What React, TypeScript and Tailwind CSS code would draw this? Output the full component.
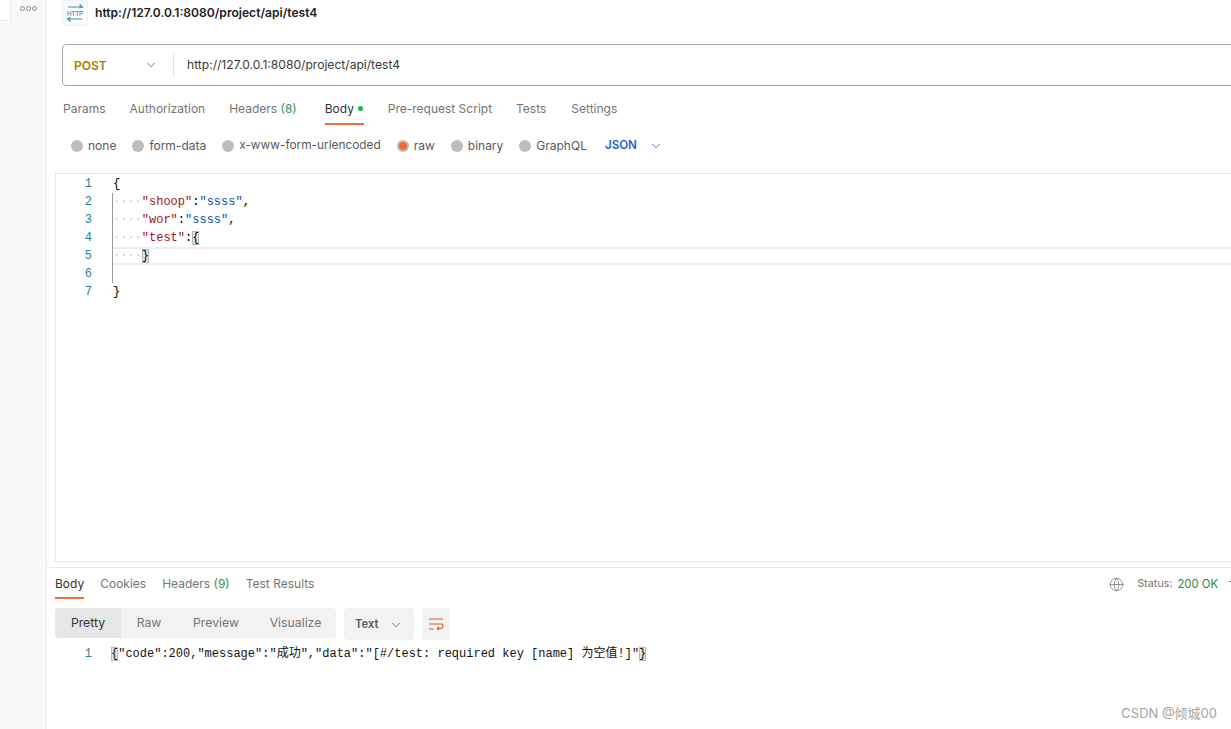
import { ChevronDown, Globe } from 'lucide-react'

const sans = "font-['Inter','Noto_Sans_CJK_SC',sans-serif]"
const mono = "font-['Liberation_Mono','Noto_Sans_CJK_SC',monospace]"

function HttpIcon() {
  return (
    <div className="flex h-[26px] w-[26px] shrink-0 items-center justify-center rounded-[4px] border border-[#efefef] bg-[#fafafa]">
      <svg width="24" height="24" viewBox="0 0 24 24" fill="none">
        <path d="M5 6H19M16.500 3.500L19.500 6L16.500 7" stroke="#2f9aa8" strokeWidth="1.2" />
        <path d="M19 18H5M7.500 16.500L4.500 18L7.500 20.500" stroke="#2f9aa8" strokeWidth="1.2" />
        <text transform="translate(12 15) scale(0.77 1)" textAnchor="middle" fontSize="8" fontFamily="Liberation Sans" fill="#1f6f9e">HTTP</text>
      </svg>
    </div>
  )
}

function WrapIcon() {
  return (
    <svg width="16" height="16" viewBox="0 0 16 16" fill="none" stroke="#e0562a" strokeWidth="1.1">
      <path d="M1 3H15M1 8H13.500C15.500 8 15.500 12.500 13 12.500H9.500M11 10.800L9.200 12.500L11 14.200M1 13H6" />
    </svg>
  )
}

function Radio({ label, checked, small }: { label: string; checked?: boolean; small?: boolean }) {
  return (
    <div className="flex items-center gap-[5px]">
      <span className="flex h-[12px] w-[12px] items-center justify-center rounded-full bg-[#bdbdbd]">
        {checked && <span className="h-[8px] w-[8px] rounded-full bg-[#f26b3a]" />}
      </span>
      <span className={small ? 'text-[11.85px] text-[#5a5a5a]' : 'text-[#5a5a5a]'}>{label}</span>
    </div>
  )
}

function Dots() {
  return <span className="text-[#cfcfcf]">····</span>
}

function Brace({ children }: { children: string }) {
  return <span className="bg-[#e2e6df] outline outline-1 -outline-offset-1 outline-[#b5b8b3]">{children}</span>
}

function Gutter({ n }: { n: number }) {
  return <span className="w-[36px] shrink-0 text-right text-[#2d7d9a]">{n}</span>
}

function CodeLine({ n, children }: { n: number; children?: React.ReactNode }) {
  return (
    <div className="flex h-[18px] items-center">
      <Gutter n={n} />
      <div className="ml-[21px] flex-1 whitespace-pre">{children}</div>
    </div>
  )
}

export default function App() {
  return (
    <div className={`relative flex h-[729px] w-[1231px] overflow-hidden bg-white text-[13px] ${sans}`}>
      {/* sidebar */}
      <div className="flex w-[47px] shrink-0 border-r border-[#ededed] bg-[#f9f9f9]">
        <div className="h-[21px] w-[11px] rounded-br-[2px] border-r border-b border-[#ececec] bg-white" />
        <div className="ml-[9px] mt-[6px] flex h-[6px] gap-[1px]">
          <span className="h-[5px] w-[5px] rounded-full border border-[#8a8a8a]" />
          <span className="h-[5px] w-[5px] rounded-full border border-[#8a8a8a]" />
          <span className="h-[5px] w-[5px] rounded-full border border-[#8a8a8a]" />
        </div>
      </div>

      <div className="flex min-w-0 flex-1 flex-col">
        {/* title */}
        <div className="flex h-[44px] items-start gap-[7px] pl-[15px]">
          <HttpIcon />
          <span className="mt-[5px] text-[12.1px] leading-[16px] font-semibold text-[#212121]">http://127.0.0.1:8080/project/api/test4</span>
        </div>

        {/* url bar */}
        <div className="-mr-[20px] ml-[15px] flex h-[42px] items-center rounded-[4px] border border-[#a6a6a6]">
          <span className="ml-[11px] mt-[1px] w-[72px] text-[12px] font-semibold text-[#ad7a03]">POST</span>
          <ChevronDown size={14} strokeWidth={1.4} className="-ml-[2px] text-[#5f5f5f]" />
          <span className="ml-[15px] h-[24px] w-px bg-[#e0e0e0]" />
          <span className="ml-[13px] text-[12.1px] text-[#3a3a3a]">http://127.0.0.1:8080/project/api/test4</span>
        </div>

        {/* request tabs */}
        <div className="ml-[16px] mt-[14px] flex h-[25px] gap-[24px] text-[12px] text-[#757575]">
          <span>Params</span>
          <span>Authorization</span>
          <span className="mr-[4px]">Headers <span className="text-[#3a8f5c]">(8)</span></span>
          <span className="flex h-[25px] w-[39px] items-start gap-[4px] border-b-2 border-[#f26b3a] text-[#333]">
            Body
            <span className="mt-[6px] h-[5px] w-[5px] rounded-full bg-[#0cbb52]" />
          </span>
          <span>Pre-request Script</span>
          <span>Tests</span>
          <span className="ml-[1px]">Settings</span>
        </div>

        {/* body types */}
        <div className="ml-[24px] mt-[13px] flex h-[16px] items-center gap-[16px] text-[12px]">
          <Radio label="none" />
          <Radio label="form-data" />
          <Radio label="x-www-form-urlencoded" small />
          <Radio label="raw" checked />
          <Radio label="binary" />
          <Radio label="GraphQL" />
          <span className="ml-[2px] flex items-center gap-[12px] text-[11.6px] font-semibold text-[#1f5fd0]">
            JSON
            <ChevronDown size={14} strokeWidth={1.5} />
          </span>
        </div>

        {/* editor */}
        <div className={`-mr-[2px] ml-[8px] mt-[19px] h-[389px] border border-[#e6e6e6] pt-[1px] text-[12px] leading-[18px] ${mono}`}>
          <CodeLine n={1}>{'{'}</CodeLine>
          <div className="relative">
            <span className="absolute top-0 bottom-0 left-[56px] w-px bg-[#9a9a9a]" />
            <CodeLine n={2}><Dots /><span className="text-[#a31515]">"shoop"</span>:<span className="text-[#0451a5]">"ssss"</span>,</CodeLine>
            <CodeLine n={3}><Dots /><span className="text-[#a31515]">"wor"</span>:<span className="text-[#0451a5]">"ssss"</span>,</CodeLine>
            <CodeLine n={4}><Dots /><span className="text-[#a31515]">"test"</span>:<Brace>{'{'}</Brace></CodeLine>
            <div className="flex h-[18px] items-center">
              <Gutter n={5} />
              <div className="ml-[21px] h-[18px] flex-1 border-y-2 border-[#eeeeee] leading-[14px] whitespace-pre"><Dots /><Brace>{'}'}</Brace></div>
            </div>
            <CodeLine n={6} />
          </div>
          <CodeLine n={7}>{'}'}</CodeLine>
        </div>

        {/* response */}
        <div className="mt-[5px] border-t border-[#ededed]">
          <div className="flex h-[31px] items-start pl-[8px] text-[12px] text-[#757575]">
            <div className="flex gap-[16px]">
              <span className="h-[31px] border-b-2 border-[#f26b3a] pt-[7px] text-[#333]">Body</span>
              <span className="pt-[7px]">Cookies</span>
              <span className="pt-[7px]">Headers <span className="text-[#3a8f5c]">(9)</span></span>
              <span className="pt-[7px]">Test Results</span>
            </div>
            <div className="ml-auto flex items-center pt-[8px] text-[11.3px]">
              <Globe size={15} strokeWidth={1} className="mr-[13px] text-[#5f5f5f]" />
              <span className="text-[10.8px]">Status:</span>
              <span className="ml-[5px] text-[#1d8a4a]">200 OK</span>
              <span className="mb-[6px] ml-[11px] h-[1px] w-[2px] bg-[#e0562a]" />
            </div>
          </div>

          <div className="ml-[8px] mt-[9px] flex h-[32px] items-start gap-[8px] text-[12.25px] text-[#757575]">
            <div className="flex h-[30px] items-center rounded-[4px] bg-[#f2f2f2]">
              <span className="flex h-[30px] w-[66px] items-center justify-center rounded-l-[4px] bg-[#e6e6e6] text-[#333]">Pretty</span>
              <span className="flex w-[56px] justify-center">Raw</span>
              <span className="flex w-[78px] justify-center">Preview</span>
              <span className="flex w-[81px] justify-center">Visualize</span>
            </div>
            <div className="flex h-[32px] w-[70px] items-center justify-between rounded-[4px] bg-[#f2f2f2] px-[11px] pt-[1px] text-[11.2px] font-semibold text-[#5a5a5a]">
              Text
              <ChevronDown size={14} strokeWidth={1.3} />
            </div>
            <div className="flex h-[32px] w-[28px] items-center justify-center rounded-[4px] bg-[#f2f2f2]">
              <WrapIcon />
            </div>
          </div>

          <div className={`mt-[5px] flex h-[18px] items-center text-[12px] whitespace-pre text-[#111] ${mono}`}>
            <span className="w-[45px] shrink-0 text-right text-[#2d7d9a]">1</span>
            <span className="ml-[19px]"><Brace>{'{'}</Brace>"code":200,"message":"成功","data":"[#/test: required key [name] 为空值!]"<Brace>{'}'}</Brace></span>
          </div>
        </div>
      </div>

      {/* watermark */}
      <span className="absolute right-[14px] bottom-[6px] text-[13px] text-[#a3a3a3]">CSDN @倾城00</span>
    </div>
  )
}
